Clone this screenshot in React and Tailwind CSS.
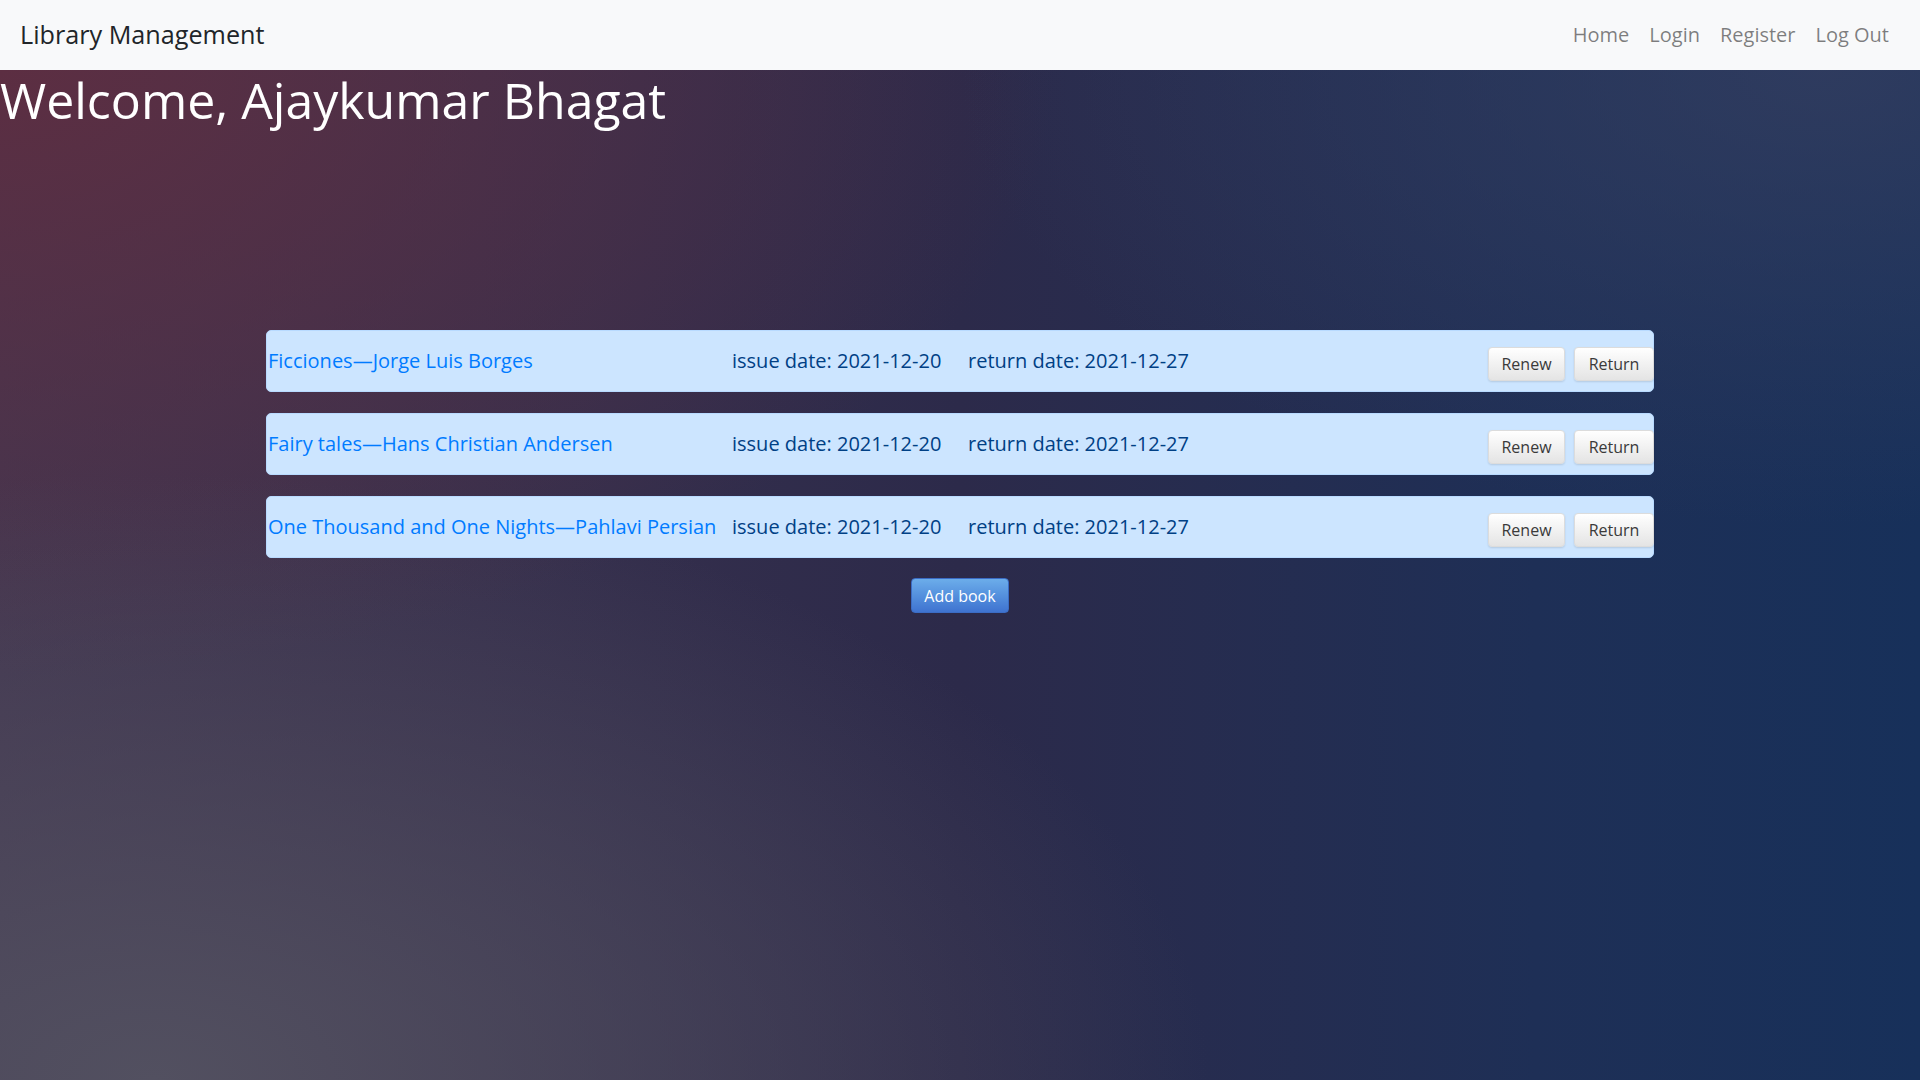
import React from "react";

const books = [
  { title: "Ficciones—Jorge Luis Borges", issued: "2021-12-20", due: "2021-12-27" },
  { title: "Fairy tales—Hans Christian Andersen", issued: "2021-12-20", due: "2021-12-27" },
  { title: "One Thousand and One Nights—Pahlavi Persian", issued: "2021-12-20", due: "2021-12-27" },
];

const greyBtn =
  "h-[34px] px-[11px] rounded-[4px] border border-[#dcdcdc] bg-gradient-to-b from-[#ffffff] to-[#e4e4e4] text-[16px] text-[#3a3a3a] shadow-[0_1px_2px_rgba(0,0,0,0.12)]";

const App = () => {
  return (
    <div className="min-h-screen flex flex-col font-['Open_Sans',sans-serif]">
      <nav className="h-[70px] bg-[#f8f9fa] flex items-center justify-between pl-[20px] pr-[31px] shrink-0">
        <span className="text-[25.2px] text-[#212529] leading-none">Library Management</span>
        <div className="flex items-center gap-[20px] text-[20px] text-black/50 leading-none">
          <a>Home</a>
          <a>Login</a>
          <a>Register</a>
          <a>Log Out</a>
        </div>
      </nav>

      <main className="flex-1 bg-[radial-gradient(ellipse_55%_60%_at_8%_100%,rgba(82,80,96,1)_0%,rgba(82,80,96,0)_100%),radial-gradient(ellipse_55%_60%_at_0%_0%,rgba(92,46,66,1)_0%,rgba(92,46,66,0)_100%),radial-gradient(ellipse_45%_45%_at_95%_0%,rgba(52,62,96,0.8)_0%,rgba(52,62,96,0)_100%),linear-gradient(to_right,#423650_0%,#2c2a4a_50%,#1e2f56_80%,#17305a_100%)]">
        <h1 className="text-[50px] leading-[1.2] text-white m-0">Welcome, Ajaykumar Bhagat</h1>

        <div className="w-[1388px] mx-auto mt-[200px] flex flex-col gap-[21px]">
          {books.map((b) => (
            <div
              key={b.title}
              className="h-[62px] bg-[#cce5ff] border border-[#b8daff] rounded-[5px] flex items-center text-[20px]"
            >
              <a className="w-[465px] pl-[1px] text-[#007bff] whitespace-nowrap">{b.title}</a>
              <span className="w-[236px] text-[#004085] whitespace-nowrap">issue date: {b.issued}</span>
              <span className="text-[#004085] whitespace-nowrap">return date: {b.due}</span>
              <div className="ml-auto mt-[5px] flex gap-[9px] -mr-px">
                <button className={`${greyBtn} w-[77px]`}>Renew</button>
                <button className={`${greyBtn} w-[80px]`}>Return</button>
              </div>
            </div>
          ))}
          <div className="flex justify-center -mt-px">
            <button className="h-[35px] w-[98px] rounded-[4px] border border-[#3b6cc4] bg-gradient-to-b from-[#6cadea] to-[#3f73d0] text-white text-[16px]">
              Add book
            </button>
          </div>
        </div>
      </main>
    </div>
  );
};

export default App;
